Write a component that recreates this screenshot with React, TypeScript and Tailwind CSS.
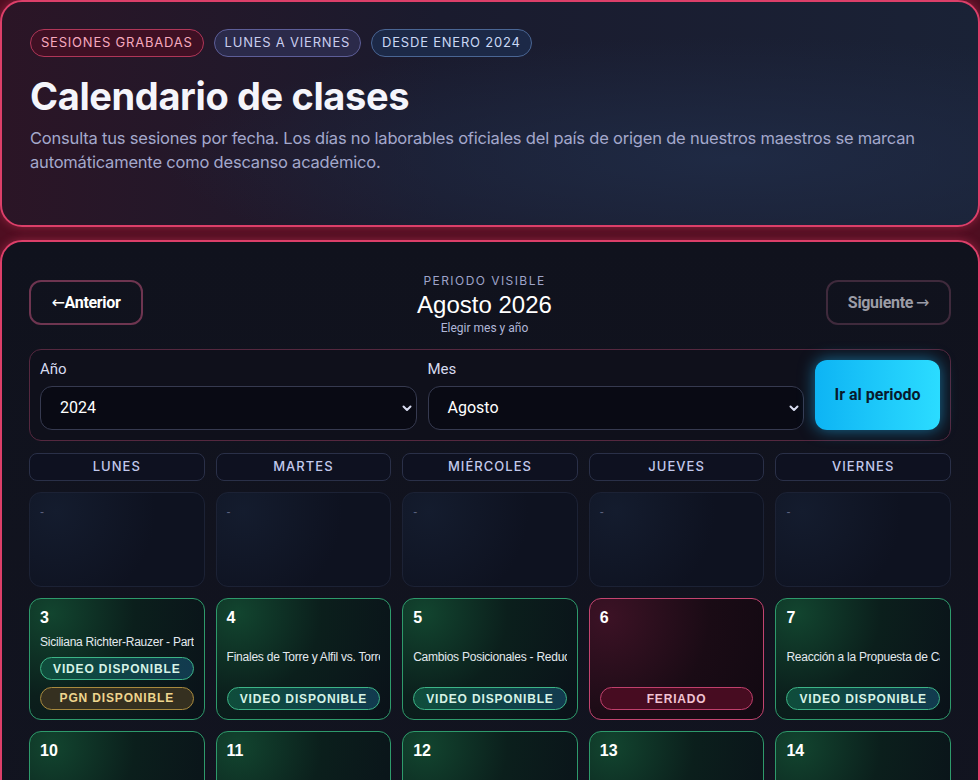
import React from 'react';

type Day = {
  n: number;
  kind: 'empty' | 'class' | 'holiday';
  title?: string;
  video?: boolean;
  pgn?: boolean;
};

const weekdays = ['Lunes', 'Martes', 'Miércoles', 'Jueves', 'Viernes'];

const days: Day[] = [
  { n: 0, kind: 'empty' },
  { n: 0, kind: 'empty' },
  { n: 0, kind: 'empty' },
  { n: 0, kind: 'empty' },
  { n: 0, kind: 'empty' },
  { n: 3, kind: 'class', title: 'Siciliana Richter-Rauzer - Parte 1', video: true, pgn: true },
  { n: 4, kind: 'class', title: 'Finales de Torre y Alfil vs. Torre', video: true },
  { n: 5, kind: 'class', title: 'Cambios Posicionales - Reducción de material', video: true },
  { n: 6, kind: 'holiday' },
  { n: 7, kind: 'class', title: 'Reacción a la Propuesta de Cambio', video: true },
  { n: 10, kind: 'class', title: 'Siciliana Richter-Rauzer - Parte 2', video: true },
  { n: 11, kind: 'class', title: 'Finales de Piezas Menores contra Peones', video: true },
  { n: 12, kind: 'class', title: 'Reacción a la Propuesta de Cambio', video: true },
  { n: 13, kind: 'class', title: 'Edición 101 Siciliana Dos Caballos', video: true },
  { n: 14, kind: 'class', title: 'Reacción a la Propuesta de Cambio', video: true },
];

const Pill: React.FC<{ tone: 'video' | 'pgn' | 'holiday'; children: React.ReactNode }> = ({ tone, children }) => {
  const styles = {
    video: 'border-[#3db487] bg-linear-to-r from-[#0f4d3b] to-[#123a4f] text-[#d6f3e6]',
    pgn: 'border-[#a88a3e] bg-[#353020] text-[#efd58e]',
    holiday: 'border-[#c0406c] bg-[#470c21] text-[#f1c3d2]',
  }[tone];
  return (
    <div
      className={`h-[23px] shrink-0 rounded-full border flex items-center justify-center text-[12px] font-bold tracking-[0.07em] ${styles}`}
      style={{ fontFamily: '"Liberation Sans", Arial, sans-serif' }}
    >
      {children}
    </div>
  );
};

const DayCell: React.FC<{ day: Day }> = ({ day }) => {
  if (day.kind === 'empty') {
    return (
      <div className="h-[95px] rounded-xl border border-[#1c2235] bg-[radial-gradient(circle_at_15%_20%,#141c2e_0%,#0e1220_60%)] px-[10px] pt-[10px] text-[12px] text-[#5b627e]">
        -
      </div>
    );
  }
  if (day.kind === 'holiday') {
    return (
      <div className="h-[122px] rounded-xl border border-[#c3446f] bg-[radial-gradient(circle_at_10%_15%,#3c1225_0%,#1a0b15_55%,#120912_100%)] px-[10px] pt-[10px] pb-[9px] flex flex-col justify-between">
        <div className="text-[16px] font-bold text-white leading-[18px]">{day.n}</div>
        <Pill tone="holiday">FERIADO</Pill>
      </div>
    );
  }
  return (
    <div className="h-[122px] rounded-xl border border-[#2e9a6b] bg-[radial-gradient(circle_at_12%_12%,#12452f_0%,#0b1f1c_45%,#0a1119_100%)] px-[10px] pt-[10px] pb-[9px] flex flex-col justify-between">
      <div className="text-[16px] font-bold text-white leading-[18px]">{day.n}</div>
      <div className="text-[12px] text-[#e3e9ee] whitespace-nowrap overflow-hidden leading-[17px] tracking-[-0.02em]">{day.title}</div>
      {day.video && <Pill tone="video">VIDEO DISPONIBLE</Pill>}
      {day.pgn && <Pill tone="pgn">PGN DISPONIBLE</Pill>}
    </div>
  );
};

const Chevron = () => (
  <svg className="w-3 h-3 text-[#d8dcf0]" viewBox="0 0 24 24" fill="none" stroke="currentColor" strokeWidth="4" strokeLinecap="round" strokeLinejoin="round">
    <path d="M5 9l7 7 7-7" />
  </svg>
);

const FakeSelect: React.FC<{ value: string }> = ({ value }) => (
  <div className="h-[44px] rounded-xl border border-[#363a50] bg-[#090a14] flex items-center justify-between pl-[19px] pr-[3px] text-[16px] text-white">
    <span>{value}</span>
    <Chevron />
  </div>
);

export default function App() {
  return (
    <div
      className="bg-[#4f0e21] flex flex-col gap-[13px] text-white overflow-hidden h-[780px]"
      style={{ fontFamily: 'Inter, "Liberation Sans", sans-serif' }}
    >
      {/* Hero */}
      <section className="shrink-0 h-[227px] rounded-[22px] border-2 border-[#dc3f69] shadow-[0_0_10px_rgba(225,60,100,0.45)] bg-[radial-gradient(ellipse_at_75%_70%,#1f2a44_0%,rgba(31,42,68,0)_55%),linear-gradient(90deg,#2b1526_0%,#1a1b2e_45%,#1a2236_100%)] px-[28px] pt-[27px]">
        <div className="flex gap-[10px] text-[13px] tracking-[0.06em]">
          <span className="h-[28px] px-[10px] rounded-full border border-[#b03658] bg-[#3f1024] text-[#f6a9be] flex items-center">SESIONES GRABADAS</span>
          <span className="h-[28px] px-[10px] rounded-full border border-[#5d5e98] bg-[#2b2a4a] text-[#c9cdee] flex items-center">LUNES A VIERNES</span>
          <span className="h-[28px] px-[10px] rounded-full border border-[#4a6694] bg-[#1c2947] text-[#cad8f4] flex items-center">DESDE ENERO 2024</span>
        </div>
        <h1 className="mt-[15px] text-[38px] font-bold leading-[48px] text-[#f5f5fb] tracking-[-0.01em]">Calendario de clases</h1>
        <p className="mt-[6px] text-[16.5px] leading-[24px] text-[#a4a8cc] tracking-[-0.012em]">
          Consulta tus sesiones por fecha. Los días no laborables oficiales del país de origen de nuestros maestros se marcan automáticamente como descanso académico.
        </p>
      </section>

      {/* Calendar */}
      <section className="flex-1 rounded-[22px] border-2 border-[#dc3f69] shadow-[0_0_10px_rgba(225,60,100,0.45)] bg-[linear-gradient(180deg,#10121d_0%,#121420_100%)] px-[27px] pt-[37px]">
        <div className="flex items-start justify-between" style={{ fontFamily: 'Roboto, "Liberation Sans", sans-serif' }}>
          <button className="mt-[1px] h-[45px] w-[114px] rounded-xl border-2 border-[#6e3550] text-[16px] font-bold text-white flex items-center justify-center tracking-[-0.02em]">
            <span className="font-normal" style={{ fontFamily: '"DejaVu Sans", sans-serif' }}>←</span>Anterior
          </button>
          <div className="flex flex-col items-center -mt-[7px]">
            <div className="text-[12px] tracking-[0.12em] text-[#9ea3c9]" style={{ fontFamily: 'Inter, sans-serif' }}>PERIODO VISIBLE</div>
            <div className="text-[24px] leading-[30px] text-white" style={{ fontFamily: '"Liberation Sans", Arial, sans-serif' }}>Agosto 2026</div>
            <div className="text-[12px] leading-[16px] text-[#b0b7d8]">Elegir mes y año</div>
          </div>
          <button className="mt-[1px] h-[45px] w-[125px] rounded-xl border-2 border-[#3f2a3c] text-[16px] font-bold text-[#9b9ca6] flex items-center justify-center gap-[3px] tracking-[-0.02em]">
            Siguiente<span className="font-normal" style={{ fontFamily: '"DejaVu Sans", sans-serif' }}>→</span>
          </button>
        </div>

        <div className="mt-[13px] rounded-xl border border-[#55283f] bg-[#0f101b] p-[10px] flex gap-[11px]" style={{ fontFamily: 'Roboto, "Liberation Sans", sans-serif' }}>
          <div className="flex-1 flex flex-col">
            <label className="text-[15px] text-[#d7dbef] leading-[18px] mb-[8px]">Año</label>
            <FakeSelect value="2024" />
          </div>
          <div className="flex-1 flex flex-col">
            <label className="text-[15px] text-[#d7dbef] leading-[18px] mb-[8px]">Mes</label>
            <FakeSelect value="Agosto" />
          </div>
          <button className="w-[125px] rounded-xl bg-linear-to-r from-[#0db4f4] to-[#2bdcff] text-[#081a2c] text-[16px] font-bold shadow-[0_0_16px_rgba(30,190,255,0.55)]">
            Ir al periodo
          </button>
        </div>

        <div className="mt-[12px] grid grid-cols-5 gap-x-[11px]">
          {weekdays.map(d => (
            <div key={d} className="h-[28px] rounded-lg border border-[#2a3048] bg-[#0e1120] flex items-center justify-center text-[13px] font-medium tracking-[0.08em] uppercase text-[#c2c9ec]">
              {d}
            </div>
          ))}
        </div>

        <div className="mt-[11px] grid grid-cols-5 gap-[11px]" style={{ fontFamily: '"Liberation Sans", Arial, sans-serif' }}>
          {days.map((d, i) => (
            <DayCell key={i} day={d} />
          ))}
        </div>
      </section>
    </div>
  );
}
